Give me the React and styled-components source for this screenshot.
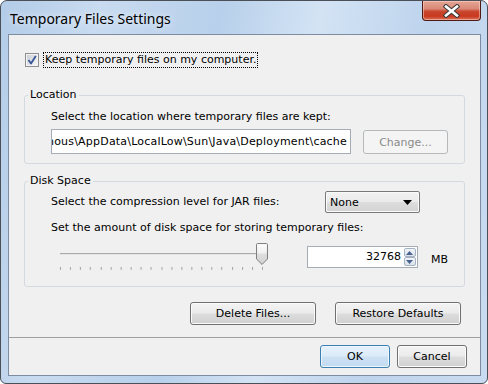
import React from "react";
import styled, { createGlobalStyle, css } from "styled-components";

const GlobalStyle = createGlobalStyle`
  html, body { margin: 0; padding: 0; background: #ffffff; }
  body {
    font-family: "DejaVu Sans", Tahoma, sans-serif;
    font-size: 11px;
    color: #000;
  }
`;

function CheckIcon() {
  return (
    <svg width="14" height="14" viewBox="0 0 14 14">
      <defs>
        <linearGradient id="cbFill" x1="0" y1="0" x2="1" y2="1">
          <stop offset="0" stopColor="#cbcfd5" />
          <stop offset="1" stopColor="#f6f6f6" />
        </linearGradient>
      </defs>
      <rect x="0.5" y="0.5" width="13" height="13" fill="#f4f4f4" stroke="#8f8f8f" />
      <rect x="2" y="2" width="10" height="10" fill="url(#cbFill)" />
      <path d="M3.5 7 L6 10.5 L10.8 3" fill="none" stroke="#3c5a9a" strokeWidth="1.9" strokeLinejoin="round" />
    </svg>
  );
}

function CloseGlyph() {
  return (
    <svg width="17" height="14" viewBox="0 0 17 14">
      <path d="M3 2.5 L14 11.5 M14 2.5 L3 11.5" stroke="#3a3a3a" strokeWidth="4.6" strokeLinecap="square" />
      <path d="M3 2.5 L14 11.5 M14 2.5 L3 11.5" stroke="#ffffff" strokeWidth="2.6" strokeLinecap="square" />
    </svg>
  );
}

function SliderDrawing() {
  const ticks = [];
  for (let i = 0; i < 21; i++) {
    const x = Math.round(9 + i * 10.15) + 0.5;
    ticks.push(<line key={i} x1={x} y1="26" x2={x} y2="29" stroke="#a3a3a3" />);
  }
  return (
    <svg width="222" height="30" viewBox="0 0 222 30">
      <defs>
        <linearGradient id="thumbFill" x1="0" y1="0" x2="0" y2="1">
          <stop offset="0" stopColor="#fdfdfd" />
          <stop offset="0.45" stopColor="#f0f0f0" />
          <stop offset="0.5" stopColor="#dedede" />
          <stop offset="1" stopColor="#d2d2d2" />
        </linearGradient>
      </defs>
      <rect x="9" y="12" width="203" height="1" fill="#a9a9a9" />
      <rect x="9" y="13" width="203" height="1" fill="#e4e4e4" />
      {ticks}
      <path
        d="M206.5 3.5 Q206.5 2.5 207.5 2.5 H216.5 Q217.5 2.5 217.5 3.5 V18 L212 23.5 L206.5 18 Z"
        fill="url(#thumbFill)"
        stroke="#7b7b7b"
      />
    </svg>
  );
}

function ComboArrow() {
  return (
    <svg width="9" height="5" viewBox="0 0 9 5">
      <path d="M0 0 H9 L4.5 5 Z" fill="#000" />
    </svg>
  );
}

function SpinArrow({ down }) {
  return (
    <svg width="7" height="4" viewBox="0 0 7 4">
      <path d={down ? "M0 0 H7 L3.5 4 Z" : "M0 4 H7 L3.5 0 Z"} fill="#4b6390" />
    </svg>
  );
}

export default function App() {
  return (
    <>
      <GlobalStyle />
      <Window>
        <TitleBar>
          <Title>Temporary Files Settings</Title>
          <CloseButton>
            <CloseGlyph />
          </CloseButton>
        </TitleBar>
        <Client>
          <CheckRow>
            <CheckIcon />
            <CheckLabel>Keep temporary files on my computer.</CheckLabel>
          </CheckRow>

          <Group>
            <Legend>Location</Legend>
            <GroupBody $bottom={9}>
              <Line>Select the location where temporary files are kept:</Line>
              <FieldRow>
                <PathField>
                  <span>C:\Users\Famous\AppData\LocalLow\Sun\Java\Deployment\cache</span>
                </PathField>
                <Button $disabled $w={85} $h={24}>Change...</Button>
              </FieldRow>
            </GroupBody>
          </Group>

          <Group $top={10}>
            <Legend>Disk Space</Legend>
            <GroupBody $top={3} $bottom={15}>
              <ComboRow>
                <ComboLabel>Select the compression level for JAR files:</ComboLabel>
                <Combo>
                  <span>None</span>
                  <ComboArrow />
                </Combo>
              </ComboRow>
              <Line $top={8}>Set the amount of disk space for storing temporary files:</Line>
              <SliderRow>
                <SliderDrawing />
                <Spinner>
                  <SpinValue>32768</SpinValue>
                  <SpinButtons>
                    <SpinButton><SpinArrow /></SpinButton>
                    <SpinButton><SpinArrow down /></SpinButton>
                  </SpinButtons>
                </Spinner>
                <Unit>MB</Unit>
              </SliderRow>
            </GroupBody>
          </Group>

          <ActionRow>
            <Button $w={126}>Delete Files...</Button>
            <Button $w={126}>Restore Defaults</Button>
          </ActionRow>
          <Separator />
          <DialogRow>
            <Button $default $w={70}>OK</Button>
            <Button $w={70}>Cancel</Button>
          </DialogRow>
        </Client>
      </Window>
    </>
  );
}

const Window = styled.div`
  width: 488px;
  height: 384px;
  box-sizing: border-box;
  border: 1px solid #4b5058;
  border-radius: 7px 7px 6px 6px;
  background: linear-gradient(
    100deg,
    #b3cce8 0%,
    #c8dbf0 18%,
    #b8d0eb 40%,
    #d3e3f4 58%,
    #bed4ed 78%,
    #c9dbf0 100%
  );
  display: flex;
  flex-direction: column;
  overflow: hidden;
`;

const TitleBar = styled.div`
  height: 33px;
  display: flex;
  justify-content: space-between;
  align-items: flex-start;
  flex-shrink: 0;
`;

const Title = styled.div`
  font-family: "Noto Sans", "Open Sans", sans-serif;
  font-size: 14px;
  line-height: 20px;
  margin: 8px 0 0 9px;
  color: #000;
  text-shadow: 0 0 6px rgba(255, 255, 255, 0.9);
`;

const CloseButton = styled.div`
  width: 59px;
  height: 20px;
  margin-right: 6px;
  box-sizing: border-box;
  border: 1px solid #4e1a12;
  border-top: none;
  border-radius: 0 0 4px 4px;
  background: linear-gradient(
    #e6a594 0%,
    #d98a78 40%,
    #c9462f 55%,
    #c8391f 80%,
    #d9755c 100%
  );
  box-shadow: inset 0 0 0 1px rgba(255, 220, 210, 0.5);
  display: flex;
  align-items: center;
  justify-content: center;
`;

const Client = styled.div`
  flex: 1;
  margin: 0 6px 7px 7px;
  border: 1px solid #7d8ca0;
  background: #f0f0f0;
  display: flex;
  flex-direction: column;
`;

const CheckRow = styled.div`
  display: flex;
  align-items: center;
  height: 16px;
  margin: 17px 0 0 16px;
  gap: 4px;
`;

const CheckLabel = styled.span`
  box-sizing: border-box;
  height: 16px;
  line-height: 14px;
  padding: 0 1px;
  border: 1px dotted #000;
`;

const Group = styled.fieldset`
  margin: ${(p) => p.$top ?? 20}px 15px 0;
  padding: 0;
  border: 1px solid #d3d9de;
  border-radius: 3px;
  min-width: 0;
`;

const Legend = styled.legend`
  margin-left: 3px;
  padding: 0 2px;
  line-height: 14px;
`;

const GroupBody = styled.div`
  padding: ${(p) => p.$top ?? 8}px 16px ${(p) => p.$bottom ?? 8}px 26px;
  display: flex;
  flex-direction: column;
`;

const Line = styled.div`
  line-height: 14px;
  margin-top: ${(p) => p.$top ?? 0}px;
  white-space: nowrap;
`;

const FieldRow = styled.div`
  display: flex;
  align-items: flex-end;
  gap: 12px;
  margin-top: 5px;
`;

const PathField = styled.div`
  width: 300px;
  height: 25px;
  box-sizing: border-box;
  border: 1px solid #a5acb5;
  background: #ffffff;
  display: flex;
  justify-content: flex-end;
  align-items: center;
  overflow: hidden;
  white-space: nowrap;
  padding-right: 3px;
  letter-spacing: 0.2px;
  flex-shrink: 0;
`;

const Button = styled.div`
  width: ${(p) => p.$w}px;
  height: ${(p) => p.$h ?? 23}px;
  box-sizing: border-box;
  border: 1px solid #707070;
  border-radius: 3px;
  background: linear-gradient(#f3f3f3 0%, #ebebeb 48%, #dddddd 52%, #d0d0d0 100%);
  box-shadow: inset 0 0 0 1px #fbfbfb;
  display: flex;
  align-items: center;
  justify-content: center;
  flex-shrink: 0;
  ${(p) =>
    p.$disabled &&
    css`
      border-color: #b5b9bc;
      background: #f4f4f4;
      box-shadow: none;
      color: #8a8a8a;
    `}
  ${(p) =>
    p.$default &&
    css`
      border-color: #3c7fb1;
      background: linear-gradient(#e6f2fc 0%, #dcebf9 48%, #cde1f4 52%, #c3daf1 100%);
      box-shadow: inset 0 0 0 1px #eef7fe;
    `}
`;

const ComboRow = styled.div`
  display: flex;
  align-items: center;
  height: 22px;
`;

const ComboLabel = styled.div`
  width: 274px;
  flex-shrink: 0;
  line-height: 14px;
  white-space: nowrap;
`;

const Combo = styled.div`
  width: 95px;
  height: 22px;
  box-sizing: border-box;
  border: 1px solid #7a7a7a;
  border-radius: 2px;
  background: linear-gradient(#f2f2f2 0%, #ebebeb 48%, #dddddd 52%, #d3d3d3 100%);
  box-shadow: inset 0 0 0 1px #fafafa;
  display: flex;
  align-items: center;
  justify-content: space-between;
  padding: 0 7px 0 4px;
`;

const SliderRow = styled.div`
  display: flex;
  align-items: flex-start;
  margin-top: 6px;
  height: 30px;
`;

const Spinner = styled.div`
  width: 111px;
  height: 22px;
  margin: 5px 0 0 35px;
  box-sizing: border-box;
  border: 1px solid #a5acb5;
  background: #ffffff;
  display: flex;
  align-items: stretch;
  flex-shrink: 0;
`;

const SpinValue = styled.div`
  flex: 1;
  text-align: right;
  line-height: 20px;
  padding-right: 3px;
`;

const SpinButtons = styled.div`
  width: 12px;
  margin: 1px 1px 1px 0;
  display: flex;
  flex-direction: column;
`;

const SpinButton = styled.div`
  flex: 1;
  box-sizing: border-box;
  border: 1px solid #a6b2c2;
  border-radius: 2px;
  background: linear-gradient(#f2f5f9, #d9e1ea);
  display: flex;
  align-items: center;
  justify-content: center;
`;

const Unit = styled.div`
  margin: 12px 0 0 13px;
  line-height: 14px;
`;

const ActionRow = styled.div`
  display: flex;
  justify-content: flex-end;
  gap: 19px;
  margin: 15px 19px 0 0;
`;

const Separator = styled.div`
  height: 1px;
  background: #a0a0a0;
  margin-top: 12px;
`;

const DialogRow = styled.div`
  display: flex;
  justify-content: flex-end;
  gap: 7px;
  margin: 7px 13px 0 0;
`;
